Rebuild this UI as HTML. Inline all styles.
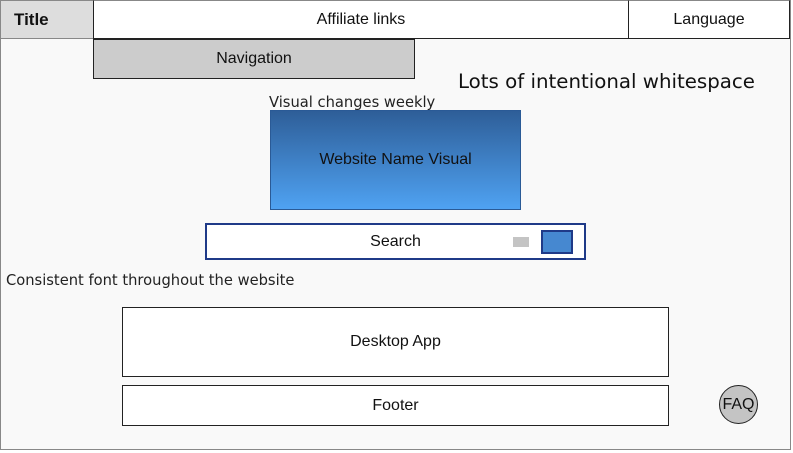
<!DOCTYPE html>
<html><head><style>
body{margin:0;width:793px;height:453px;background:#fff;position:relative;overflow:hidden;font-family:"Liberation Sans",Arial,sans-serif;}
div{position:absolute;box-sizing:border-box;}
.c{display:flex;align-items:center;justify-content:center;font-size:16px;color:#111;}
.dj{font-family:"DejaVu Sans",sans-serif;color:#222;white-space:nowrap;}
</style></head><body>
<div style="left:0;top:0;width:791px;height:450px;background:#f9f9f9;border:1px solid #888;"></div>
<div class="c" style="left:0;top:0;width:94px;height:39px;background:#ddd;border:1px solid #888;border-right:1px solid #222;font-weight:bold;font-size:17px;justify-content:flex-start;padding-left:13px;">Title</div>
<div class="c" style="left:93px;top:0;width:536px;height:39px;background:#fff;border:1px solid #222;border-top-color:#888;">Affiliate links</div>
<div class="c" style="left:628px;top:0;width:162px;height:39px;background:#fff;border:1px solid #222;border-top-color:#888;">Language</div>
<div class="c" style="left:93px;top:39px;width:322px;height:40px;background:#ccc;border:1px solid #222;">Navigation</div>
<div class="dj" style="left:458px;top:70px;font-size:19.8px;color:#111;">Lots of intentional whitespace</div>
<div class="dj" style="left:269px;top:94px;font-size:14.7px;">Visual changes weekly</div>
<div class="c" style="left:270px;top:110px;width:251px;height:100px;background:linear-gradient(#2e5e98,#4fa2f2);border:1px solid #2a5a96;">Website Name Visual</div>
<div class="c" style="left:205px;top:223px;width:381px;height:37px;background:#fff;border:2px solid #1f3a88;">Search</div>
<div style="left:513px;top:237px;width:16px;height:10px;background:#c4c4c4;"></div>
<div style="left:541px;top:230px;width:32px;height:24px;background:#4688d0;border:2px solid #1f3a88;"></div>
<div class="dj" style="left:6px;top:272px;font-size:14.7px;">Consistent font throughout the website</div>
<div class="c" style="left:122px;top:307px;width:547px;height:70px;background:#fff;border:1px solid #222;">Desktop App</div>
<div class="c" style="left:122px;top:385px;width:547px;height:41px;background:#fff;border:1px solid #222;">Footer</div>
<div class="c" style="left:719px;top:385px;width:39px;height:39px;border-radius:50%;background:#c4c4c4;border:1px solid #222;font-size:16px;">FAQ</div>
</body></html>
